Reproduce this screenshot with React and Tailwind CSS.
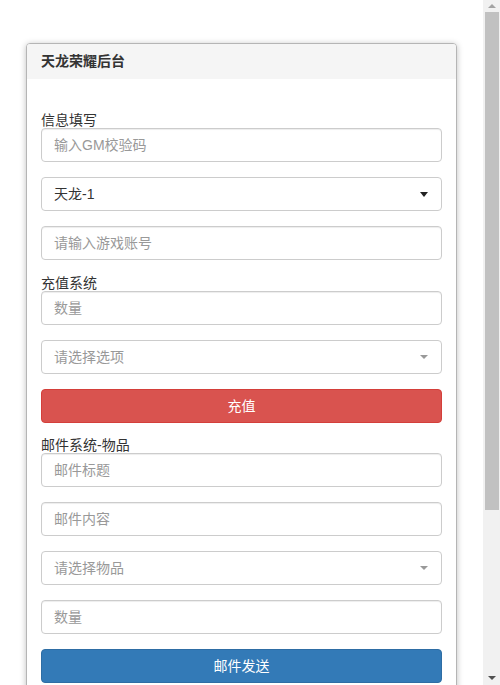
import React from "react";

const font = { fontFamily: '"Liberation Sans", "Noto Sans CJK SC", sans-serif' };

function Input({ placeholder }) {
  return (
    <div className="h-[34px] w-full rounded-[4px] border border-[#ccc] bg-white px-[12px] flex items-center text-[14px] text-[#999] shadow-[inset_0_1px_1px_rgba(0,0,0,0.075)]">
      {placeholder}
    </div>
  );
}

function Select({ text, dark }) {
  return (
    <div className="h-[34px] w-full rounded-[4px] border border-[#ccc] bg-white pl-[12px] pr-[13px] flex items-center justify-between text-[14px]">
      <span className={dark ? "text-[#333]" : "text-[#999]"}>{text}</span>
      {dark ? (
        <span className="w-0 h-0 border-l-[4px] border-r-[4px] border-t-[5px] border-l-transparent border-r-transparent border-t-[#222]" />
      ) : (
        <span className="w-0 h-0 border-l-[4px] border-r-[4px] border-t-[4px] border-l-transparent border-r-transparent border-t-[#999]" />
      )}
    </div>
  );
}

function Label({ children, short }) {
  return (
    <div className={short ? "h-[15px] leading-[15px] text-[14px] text-[#333]" : "h-[16px] leading-[16px] text-[14px] text-[#333]"}>
      {children}
    </div>
  );
}

export default function App() {
  return (
    <div className="h-[685px] overflow-hidden flex bg-white" style={font}>
      <div className="flex-1 pt-[43px] pl-[26px]">
        <div className="w-[431px] rounded-[4px] border border-[#b5b5b5] bg-white shadow-[0_1px_6px_rgba(0,0,0,0.25)] overflow-hidden">
          <div className="h-[35px] bg-[#f5f5f5] px-[14px] flex items-center text-[14px] font-bold text-[#333]">
            天龙荣耀后台
          </div>
          <div className="px-[14px] pt-[33px] pb-[15px] flex flex-col">
            <Label>信息填写</Label>
            <div className="flex flex-col gap-[15px]">
              <Input placeholder="输入GM校验码" />
              <Select text="天龙-1" dark />
              <Input placeholder="请输入游戏账号" />
            </div>
            <div className="mt-[15px]">
              <Label>充值系统</Label>
            </div>
            <div className="flex flex-col gap-[15px]">
              <Input placeholder="数量" />
              <Select text="请选择选项" />
              <button className="h-[34px] w-full rounded-[4px] border border-[#d43f3a] bg-[#d9534f] text-white text-[14px]">
                充值
              </button>
            </div>
            <div className="mt-[15px]">
              <Label short>邮件系统-物品</Label>
            </div>
            <div className="flex flex-col gap-[15px]">
              <Input placeholder="邮件标题" />
              <Input placeholder="邮件内容" />
              <Select text="请选择物品" />
              <Input placeholder="数量" />
              <button className="h-[34px] w-full rounded-[4px] border border-[#2e6da4] bg-[#337ab7] text-white text-[14px]">
                邮件发送
              </button>
              <div className="h-[40px]" />
            </div>
          </div>
        </div>
      </div>
      <div className="w-[17px] h-full bg-[#f1f1f1] flex flex-col items-center">
        <div className="h-[12px] w-full flex items-center justify-center">
          <span className="w-0 h-0 border-l-[4px] border-r-[4px] border-b-[4px] border-l-transparent border-r-transparent border-b-[#a3a3a3]" />
        </div>
        <div className="w-[14px] h-[498px] bg-[#c1c1c1]" />
        <div className="flex-1" />
        <div className="h-[14px] w-full flex items-center justify-center">
          <span className="w-0 h-0 border-l-[4px] border-r-[4px] border-t-[4px] border-l-transparent border-r-transparent border-t-[#505050]" />
        </div>
      </div>
    </div>
  );
}
